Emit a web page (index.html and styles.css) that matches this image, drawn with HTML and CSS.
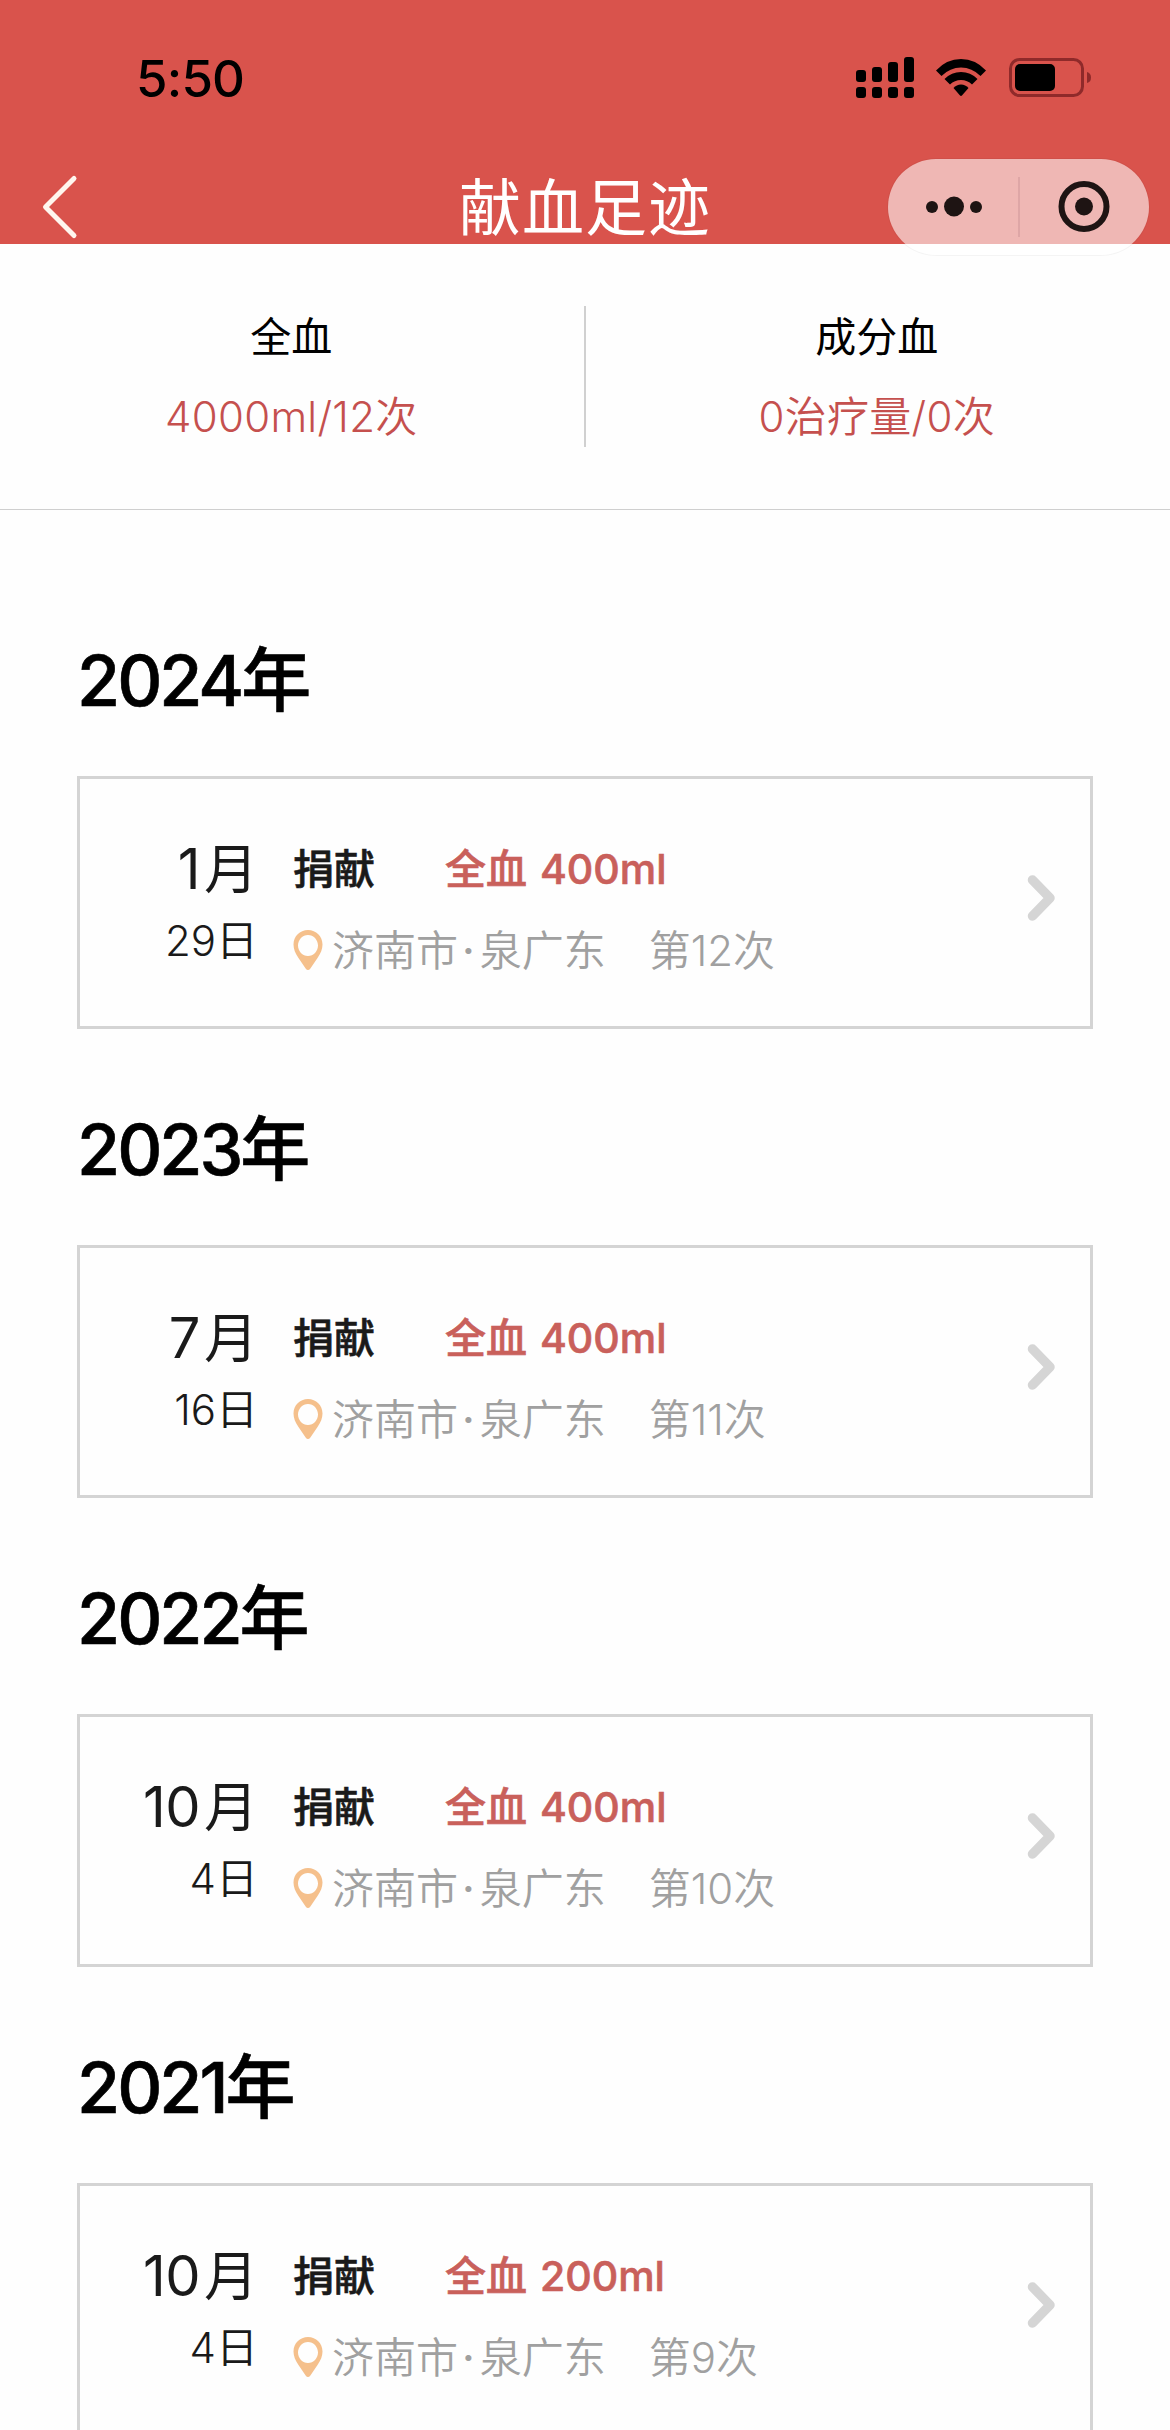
FILE: index.html
```html
<!DOCTYPE html>
<html lang="zh-CN">
<head>
<meta charset="utf-8">
<title>献血足迹</title>
<link rel="stylesheet" href="styles.css">
</head>
<body>
<svg width="0" height="0" class="defs">
  <symbol id="pin" viewBox="0 0 30 42"><path fill-rule="evenodd" d="M15 1C6.800 1 .5 7.400.5 15.500c0 4.600 1.700 8.600 5 13.500l7.300 10.700c1.200 1.700 3.200 1.700 4.400 0L24.500 29c3.300-4.900 5-8.900 5-13.500C29.500 7.400 23.200 1 15 1Zm0 5c5.500 0 10 4.700 10 10.500s-4.500 10.500-10 10.500-10-4.700-10-10.500S9.500 6 15 6Z" fill="#f5c08c"/></symbol>
  <symbol id="next" viewBox="0 0 30 48"><path d="M5.500 6 23 24 5.500 42" fill="none" stroke="#d5d5d5" stroke-width="9.500" stroke-linecap="round" stroke-linejoin="round"/></symbol>
</svg>
<header class="header">
  <div class="status">
    <span class="time">5:50</span>
    <svg class="signal" width="52" height="42" viewBox="0 0 52 42">
      <rect x="0" y="13" width="10" height="12" rx="3"/><rect x="16" y="10" width="10" height="15" rx="3"/><rect x="32" y="5" width="10" height="20" rx="3"/><rect x="48" y="0" width="10" height="25" rx="3"/>
      <rect x="0" y="30" width="10" height="11" rx="3"/><rect x="16" y="30" width="10" height="11" rx="3"/><rect x="32" y="30" width="10" height="11" rx="3"/><rect x="48" y="30" width="10" height="11" rx="3"/>
    </svg>
    <svg class="wifi" width="50" height="38" viewBox="0 0 50 38">
      <path d="M0 11.500Q10.500 0 25 0T50 11.500L44.500 17Q36 8.500 25 8.500T5.500 17Z"/>
      <path d="M8.500 20Q15.500 13 25 13T41.500 20L36 25.500Q31.500 21 25 21T14 25.500Z"/>
      <path d="M17.500 29Q20.500 25.500 25 25.500T32.500 29L26.200 36.300Q25 37.500 23.800 36.300Z"/>
    </svg>
    <svg class="battery" width="83" height="40" viewBox="0 0 83 40">
      <rect x="1.500" y="1.500" width="72" height="36" rx="9" fill="none" stroke="#8f2a2a" stroke-width="3"/>
      <rect x="6" y="6" width="40" height="27" rx="5"/>
      <path d="M78 14q4 1 4 5.500t-4 5.500Z" fill="#8f2a2a"/>
    </svg>
  </div>
  <nav class="nav">
    <svg class="back" width="38" height="66" viewBox="0 0 38 66"><path d="M33 4.500 4.500 33 33 61.500" fill="none" stroke="#fff6ee" stroke-width="5" stroke-linecap="round" stroke-linejoin="round"/></svg>
    <h1 class="title">献血足迹</h1>
    <div class="capsule">
      <svg width="261" height="96" viewBox="0 0 261 96" fill="#1e1413">
        <circle cx="44" cy="48" r="6"/><circle cx="66" cy="47.500" r="10"/><circle cx="88" cy="48" r="6"/>
        <path d="M131 18v60" stroke="#d9a0a2" stroke-width="1.500"/>
        <circle cx="196" cy="47.500" r="22.500" fill="none" stroke="#1e1413" stroke-width="6"/><circle cx="196" cy="47.500" r="9"/>
      </svg>
    </div>
  </nav>
</header>
<section class="stats">
  <div class="stat"><div class="stat-label">全血</div><div class="stat-value">4000ml/12次</div></div>
  <div class="stat"><div class="stat-label">成分血</div><div class="stat-value">0治疗量/0次</div></div>
</section>
<main class="timeline">
  <section class="year">
    <h2 class="year-title">2024年</h2>
    <article class="card">
      <div class="date"><div class="month">1<span class="unit">月</span></div><div class="day">29<span class="unit">日</span></div></div>
      <div class="details">
        <div class="donation"><span class="action">捐献</span><span class="amount">全血 400ml</span></div>
        <div class="place"><svg class="pin"><use href="#pin"/></svg><span class="site">济南市<span class="dot">·</span>泉广东</span><span class="count">第12次</span></div>
      </div>
      <svg class="next"><use href="#next"/></svg>
    </article>
  </section>
  <section class="year">
    <h2 class="year-title">2023年</h2>
    <article class="card">
      <div class="date"><div class="month">7<span class="unit">月</span></div><div class="day">16<span class="unit">日</span></div></div>
      <div class="details">
        <div class="donation"><span class="action">捐献</span><span class="amount">全血 400ml</span></div>
        <div class="place"><svg class="pin"><use href="#pin"/></svg><span class="site">济南市<span class="dot">·</span>泉广东</span><span class="count">第11次</span></div>
      </div>
      <svg class="next"><use href="#next"/></svg>
    </article>
  </section>
  <section class="year">
    <h2 class="year-title">2022年</h2>
    <article class="card">
      <div class="date"><div class="month">10<span class="unit">月</span></div><div class="day">4<span class="unit">日</span></div></div>
      <div class="details">
        <div class="donation"><span class="action">捐献</span><span class="amount">全血 400ml</span></div>
        <div class="place"><svg class="pin"><use href="#pin"/></svg><span class="site">济南市<span class="dot">·</span>泉广东</span><span class="count">第10次</span></div>
      </div>
      <svg class="next"><use href="#next"/></svg>
    </article>
  </section>
  <section class="year">
    <h2 class="year-title">2021年</h2>
    <article class="card">
      <div class="date"><div class="month">10<span class="unit">月</span></div><div class="day">4<span class="unit">日</span></div></div>
      <div class="details">
        <div class="donation"><span class="action">捐献</span><span class="amount">全血 200ml</span></div>
        <div class="place"><svg class="pin"><use href="#pin"/></svg><span class="site">济南市<span class="dot">·</span>泉广东</span><span class="count">第9次</span></div>
      </div>
      <svg class="next"><use href="#next"/></svg>
    </article>
  </section>
</main>
</body>
</html>
```
FILE: styles.css
```css
* { box-sizing: border-box; }
body {
  margin: 0;
  width: 1170px;
  height: 2430px;
  overflow: hidden;
  background: #fefefe;
  color: #1a1a1a;
  font-family: Inter, "Noto Sans CJK SC", sans-serif;
}
h1, h2 { margin: 0; font-weight: inherit; }
svg { display: block; flex: none; overflow: visible; }
.defs { position: absolute; }

.header { height: 244px; background: #d9534c; }
.status {
  display: flex;
  height: 159px;
  padding: 57px 0 0 136px;
}
.time {
  width: 720px;
  font-size: 51px;
  font-weight: 550;
  line-height: 43px;
  letter-spacing: -.8px;
  color: #000;
}
.wifi { margin: 2px 0 0 28px; }
.battery { margin: 1px 0 0 23px; }
.nav {
  display: grid;
  grid-template-columns: 282px 1fr 282px;
  align-items: center;
  height: 96px;
}
.back { margin-left: 41px; }
.title {
  padding-top: 3px;
  text-align: center;
  font-size: 62px;
  line-height: 93px;
  letter-spacing: 1px;
  font-weight: 400;
  color: #fff;
}
.capsule {
  position: relative;
  width: 261px;
  height: 96px;
  border-radius: 48px;
  background: rgba(255, 255, 255, .58);
  box-shadow: 0 0 0 1px rgba(0, 0, 0, .04);
}

.stats {
  display: flex;
  height: 266px;
  padding-top: 62px;
  border-bottom: 1px solid #cfcfcf;
}
.stat { flex: 1; height: 141px; padding-right: 2px; text-align: center; }
.stat + .stat { border-left: 2px solid #d0d0d0; margin-left: -1px; }
.stat-label { padding-top: 1px; font-size: 41px; line-height: 60px; color: #000; }
.stat-value {
  margin-top: 20px;
  font-size: 42px;
  line-height: 60px;
  font-weight: 350;
  letter-spacing: .3px;
  color: #c5504e;
}

.timeline { display: grid; gap: 81px; padding: 131px 77px 0; }
.year-title {
  margin-bottom: 55px;
  font-size: 70px;
  font-weight: 500;
  line-height: 80px;
  letter-spacing: -3px;
  color: #000;
  -webkit-text-stroke: .6px currentColor;
}
.card {
  display: flex;
  height: 253px;
  padding-top: 60px;
  border: 3px solid #d4d4d4;
}
.date { width: 178px; text-align: right; }
.month { font-size: 56px; line-height: 60px; letter-spacing: -.5px; }
.month .unit { margin-left: 4px; font-size: 54px; letter-spacing: 0; }
.day { margin-top: 16px; font-size: 42px; line-height: 50px; font-weight: 350; }
.details { flex: 1; margin-left: 35px; }
.donation {
  display: flex;
  font-size: 41px;
  line-height: 60px;
  font-weight: 500;
  -webkit-text-stroke: .6px currentColor;
}
.action { width: 152px; }
.amount { word-spacing: 2px; color: #c9605b; }
.place {
  display: flex;
  margin-top: 27px;
  font-size: 42px;
  line-height: 50px;
  font-weight: 350;
  color: #a0a0a0;
}
.pin { width: 30px; height: 42px; margin: 3px 9px 0 0; }
.dot { margin: 0 5px 0 4px; font-weight: 500; }
.count { margin-left: 43px; }
.next { width: 30px; height: 48px; margin: 35px 33px 0 0; }
```
